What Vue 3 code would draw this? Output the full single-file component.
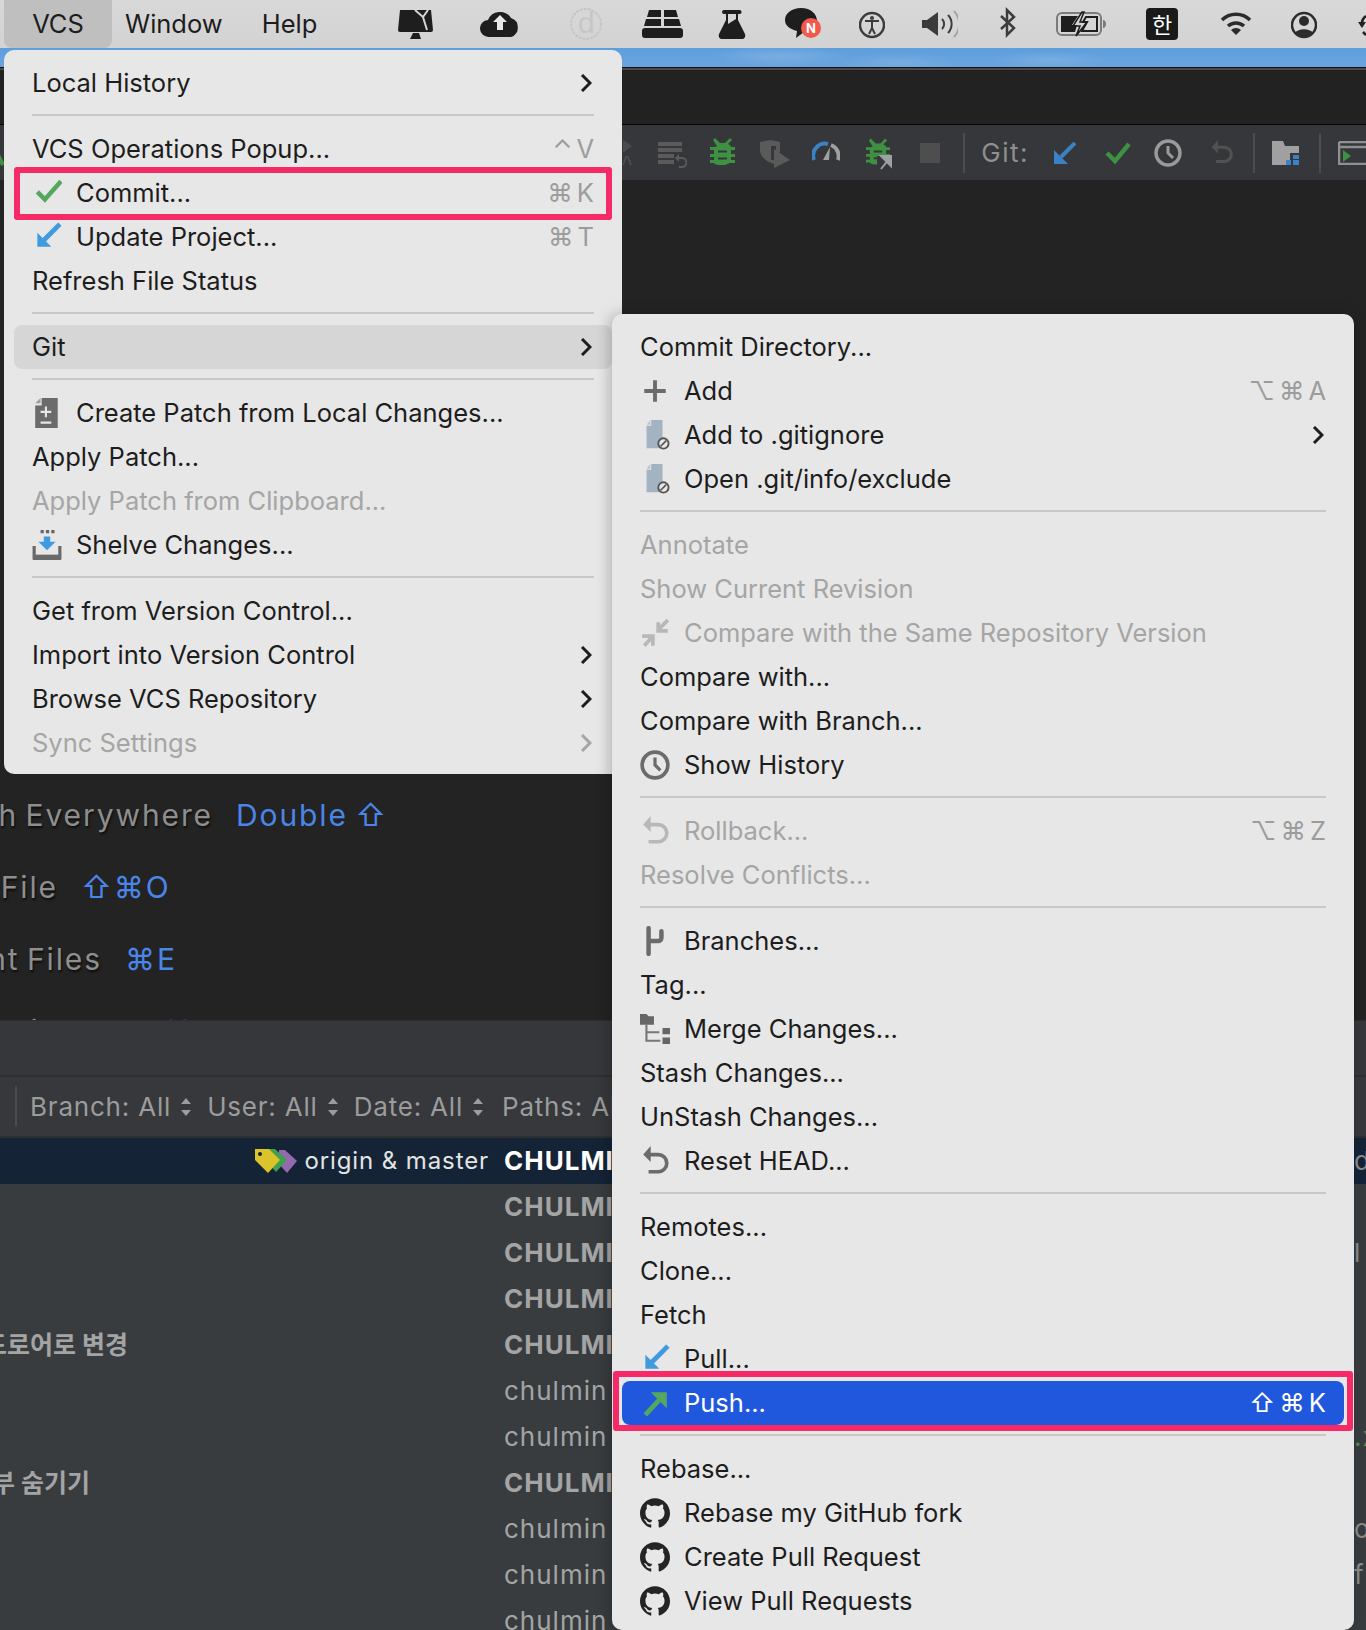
<script setup>
const leftMenu = [
  { t: 'Local History', arrow: true },
  { sep: true },
  { t: 'VCS Operations Popup...', sc: ['⌃', 'V'] },
  { t: 'Commit...', icon: 'i-check', color: 'c-green', sc: ['⌘', 'K'], mark: 'mark-commit' },
  { t: 'Update Project...', icon: 'i-down', color: 'c-blue', sc: ['⌘', 'T'] },
  { t: 'Refresh File Status' },
  { sep: true },
  { t: 'Git', arrow: true, active: true },
  { sep: true },
  { t: 'Create Patch from Local Changes...', icon: 'i-patch', color: 'c-grey' },
  { t: 'Apply Patch...' },
  { t: 'Apply Patch from Clipboard...', dis: true },
  { t: 'Shelve Changes...', icon: 'i-shelve', color: 'c-grey' },
  { sep: true },
  { t: 'Get from Version Control...' },
  { t: 'Import into Version Control', arrow: true },
  { t: 'Browse VCS Repository', arrow: true },
  { t: 'Sync Settings', arrow: true, dis: true }
]
const gitMenu = [
  { t: 'Commit Directory...' },
  { t: 'Add', icon: 'i-plus', color: 'c-grey', sc: ['⌥', '⌘', 'A'] },
  { t: 'Add to .gitignore', icon: 'i-ignored', color: 'c-slate', arrow: true },
  { t: 'Open .git/info/exclude', icon: 'i-ignored', color: 'c-slate' },
  { sep: true },
  { t: 'Annotate', dis: true },
  { t: 'Show Current Revision', dis: true },
  { t: 'Compare with the Same Repository Version', dis: true, icon: 'i-compare', color: 'c-faint' },
  { t: 'Compare with...' },
  { t: 'Compare with Branch...' },
  { t: 'Show History', icon: 'i-clock', color: 'c-grey' },
  { sep: true },
  { t: 'Rollback...', dis: true, icon: 'i-undo', color: 'c-faint', sc: ['⌥', '⌘', 'Z'] },
  { t: 'Resolve Conflicts...', dis: true },
  { sep: true },
  { t: 'Branches...', icon: 'i-branch', color: 'c-grey' },
  { t: 'Tag...' },
  { t: 'Merge Changes...', icon: 'i-merge', color: 'c-grey' },
  { t: 'Stash Changes...' },
  { t: 'UnStash Changes...' },
  { t: 'Reset HEAD...', icon: 'i-undo', color: 'c-grey' },
  { sep: true },
  { t: 'Remotes...' },
  { t: 'Clone...' },
  { t: 'Fetch' },
  { t: 'Pull...', icon: 'i-down', color: 'c-blue' },
  { t: 'Push...', icon: 'i-up', color: 'c-green', sc: ['⇧', '⌘', 'K'], selected: true, mark: 'mark-push' },
  { sep: true },
  { t: 'Rebase...' },
  { t: 'Rebase my GitHub fork', icon: 'i-github', color: 'c-black' },
  { t: 'Create Pull Request', icon: 'i-github', color: 'c-black' },
  { t: 'View Pull Requests', icon: 'i-github', color: 'c-black' }
]
const menus = [
  { cls: 'menu-left', items: leftMenu },
  { cls: 'menu-git', items: gitMenu }
]
const hints = [
  { label: 'Search Everywhere', keys: 'Double ⇧' },
  { label: 'Go to File', keys: '⇧⌘O' },
  { label: 'Recent Files', keys: '⌘E' },
  { label: 'Navigation Bar', keys: '⌘↑' }
]
const filters = ['Branch: All', 'User: All', 'Date: All']
const commits = [
  { author: 'CHULMIN', bold: true, selected: true, refs: 'origin & master', peek: 'd' },
  { author: 'CHULMIN', bold: true },
  { author: 'CHULMIN', bold: true, peek: 'l' },
  { author: 'CHULMIN', bold: true },
  { author: 'CHULMIN', bold: true, msg: '드로어로 변경', msgCls: 'msg-a' },
  { author: 'chulmin' },
  { author: 'chulmin', peek: '.x', green: true },
  { author: 'CHULMIN', bold: true, msg: '일부 숨기기', msgCls: 'msg-b' },
  { author: 'chulmin', peek: 'o' },
  { author: 'chulmin', peek: 'f' },
  { author: 'chulmin' }
]
</script>

<template>
  <div class="page">
    <svg class="defs" width="0" height="0" aria-hidden="true">
      <symbol id="i-check" viewBox="0 0 28 28"><path d="M5 13l7 7L27 3" fill="none" stroke="currentColor" stroke-width="4.200" /></symbol>
      <symbol id="i-down" viewBox="0 0 28 28"><path d="M26 2L11 17" fill="none" stroke="currentColor" stroke-width="4.500" /><path d="M5 10v13h13z" fill="currentColor" /></symbol>
      <symbol id="i-up" viewBox="0 0 28 28"><path d="M5 25L18 11" fill="none" stroke="currentColor" stroke-width="4.500" /><path d="M10 4h15v15z" fill="currentColor" /></symbol>
      <symbol id="i-patch" viewBox="0 0 28 28"><path d="M9 0h15v28H3V7h6z" fill="currentColor" /><path d="M3 5l5-5v5z" fill="#a0a0a0" /><path d="M8 13h10M13 8v10M8 23h10" stroke="#e7e7e7" stroke-width="2" /></symbol>
      <symbol id="i-shelve" viewBox="0 0 28 28"><path d="M8 0h3v3H8zM13 0h3v3h-3zM18 0h3v3h-3z" fill="#666" /><path d="M11 6h6v5h5l-8 8-8-8h5z" fill="#3f9ae0" /><path d="M2 15v11h24V15" fill="none" stroke="#6a6a6a" stroke-width="3" /><path d="M1 23h26v5H1z" fill="#6a6a6a" /></symbol>
      <symbol id="i-plus" viewBox="0 0 28 28"><path d="M14 4v20M4 14h20" stroke="currentColor" stroke-width="3.600" /></symbol>
      <symbol id="i-ignored" viewBox="0 0 28 32"><path d="M10 0h12v30H5V6h5z" fill="currentColor" /><path d="M5 5l4-5v5z" fill="#bcc5cf" /><circle cx="23" cy="25" r="5.500" fill="#e7e7e7" stroke="#555" stroke-width="2" /><path d="M20 28l6-6" stroke="#555" stroke-width="1.800" /></symbol>
      <symbol id="i-compare" viewBox="0 0 28 28"><path d="M17 11L26 2M17 4v8h9" fill="none" stroke="currentColor" stroke-width="3.500" /><path d="M12 17l-8 9M12 26v-9H2" fill="none" stroke="currentColor" stroke-width="3.500" /></symbol>
      <symbol id="i-clock" viewBox="0 0 28 28"><circle cx="14" cy="14" r="12" fill="none" stroke="currentColor" stroke-width="3.400" /><path d="M14 7v7l5 5" fill="none" stroke="currentColor" stroke-width="3" /></symbol>
      <symbol id="i-undo" viewBox="0 0 28 28"><path d="M9 8h8a7 7 0 0 1 0 16H8" fill="none" stroke="currentColor" stroke-width="3.400" /><path d="M10 0v15L3 8z" fill="currentColor" /></symbol>
      <symbol id="i-branch" viewBox="0 0 28 28"><path d="M8 2v24M20 5v6a3 3 0 0 1-3 3H8" fill="none" stroke="currentColor" stroke-width="4.200" stroke-linecap="round" /></symbol>
      <symbol id="i-merge" viewBox="0 0 28 28"><path d="M0 0h6l2 2h5v8H0z" fill="#666" /><path d="M6 10v15h13M6 17h12" fill="none" stroke="#777" stroke-width="2" /><path d="M21 13h7v6h-7zM21 22h7v6h-7z" fill="#666" /></symbol>
      <symbol id="i-github" viewBox="0 0 24 24"><path fill="currentColor" d="M12 .297c-6.630 0-12 5.373-12 12 0 5.303 3.438 9.800 8.205 11.385.6.113.82-.258.82-.577 0-.285-.01-1.040-.015-2.040-3.338.724-4.042-1.610-4.042-1.610C4.422 18.070 3.633 17.700 3.633 17.700c-1.087-.744.084-.729.084-.729 1.205.084 1.838 1.236 1.838 1.236 1.070 1.835 2.809 1.305 3.495.998.108-.776.417-1.305.76-1.605-2.665-.3-5.466-1.332-5.466-5.930 0-1.310.465-2.380 1.235-3.220-.135-.303-.54-1.523.105-3.176 0 0 1.005-.322 3.300 1.230.96-.267 1.980-.399 3-.405 1.020.006 2.040.138 3 .405 2.280-1.552 3.285-1.230 3.285-1.230.645 1.653.24 2.873.12 3.176.765.84 1.230 1.910 1.230 3.220 0 4.610-2.805 5.625-5.475 5.920.42.36.81 1.096.81 2.220 0 1.606-.015 2.896-.015 3.286 0 .315.21.69.825.57C20.565 22.092 24 17.592 24 12.297c0-6.627-5.373-12-12-12" /></symbol>
      <symbol id="i-bug" viewBox="0 0 25 29"><path d="M5 0l5 5h5l5-5 2 2-4 4c2 1 3 2 3 3v14c-1 2-4 4-8.500 4S5 27 4 25V11c0-1 1-2 3-3L3 2z" fill="currentColor" /><path d="M0 9h25v3H0zM0 16h25v3H0zM0 22h25v3H0z" fill="currentColor" /><path d="M8 12.500h9v2H8zM8 19.500h9v2H8z" fill="#35373a" /></symbol>
    </svg>

    <header class="menubar">
      <nav class="appmenu">
        <span class="appitem is-open">VCS</span>
        <span class="appitem">Window</span>
        <span class="appitem">Help</span>
      </nav>
      <div class="tray">
        <svg width="35" height="48" viewBox="0 0 35 48"><path d="M2 10h31l2 20a2 2 0 0 1-2 2H2a2 2 0 0 1-2-2z" fill="#1e1e1e" /><path d="M15 33h6l2 6H12z" fill="#1e1e1e" /><path d="M17 10l8 7 4 13M25 17l5-7" fill="none" stroke="#d6d6d6" stroke-width="2" /></svg>
        <svg width="40" height="48" viewBox="0 0 40 48"><path d="M9 37a8.500 8.500 0 0 1-1-17 13 13 0 0 1 23-2 10 10 0 0 1 0 19z" fill="#1e1e1e" /><path d="M20 15l7 7h-4v8h-6v-8h-4z" fill="#e8e8e8" /></svg>
        <svg width="32" height="48" viewBox="0 0 32 48"><circle cx="16" cy="24" r="15" fill="none" stroke="#c6c6c6" stroke-width="2" stroke-dasharray="3 1" /><text x="8" y="33" class="tray-d">d</text></svg>
        <svg width="41" height="48" viewBox="0 0 41 48"><path d="M7 10h12v7H5zM22 10h12l2 7H22zM4 19h15v7H2zM22 19h15l2 7H22z" fill="#1e1e1e" /><rect y="28" width="41" height="10" rx="3" fill="#1e1e1e" /></svg>
        <svg width="28" height="48" viewBox="0 0 28 48"><path d="M6 10h15a1 1 0 0 1 1 4h-2v6l7 14c1 3-1 5-3 5H4c-2 0-4-2-3-5l7-14v-6H6a1 1 0 0 1 0-4z" fill="#1e1e1e" /><path d="M10 14h8v5l-8 5z" fill="#d6d6d6" /></svg>
        <svg width="38" height="48" viewBox="0 0 38 48"><path d="M17 8c10 0 16 6 16 13 0 7-7 11-13 11l-8 6 1-7C6 29 1 26 1 20 1 13 8 8 17 8z" fill="#1e1e1e" /><circle cx="27" cy="28" r="10" fill="#f4574b" /><text x="27" y="33" class="tray-n">N</text></svg>
        <svg width="26" height="48" viewBox="0 0 26 48"><circle cx="13" cy="25" r="12" fill="none" stroke="#3c3c3c" stroke-width="2.500" /><circle cx="13" cy="18" r="2" fill="#3c3c3c" /><path d="M6 21h14M13 21v7l-3 6M13 28l3 6" fill="none" stroke="#3c3c3c" stroke-width="2" /></svg>
        <svg width="36" height="48" viewBox="0 0 36 48"><path d="M0 20h5l11-8v24L5 28H0z" fill="#3c3c3c" /><path d="M20 19a7 7 0 0 1 0 10M26 15a13 13 0 0 1 0 18" fill="none" stroke="#3c3c3c" stroke-width="2" /><path d="M32 11a19 19 0 0 1 0 26" fill="none" stroke="#a3a3a3" stroke-width="2" /></svg>
        <svg width="17" height="48" viewBox="0 0 17 48"><path d="M2 16l13 12-7 7V10l7 7L2 29" fill="none" stroke="#3c3c3c" stroke-width="2.500" /></svg>
        <svg width="51" height="48" viewBox="0 0 51 48"><rect x="1" y="13" width="44" height="22" rx="5" fill="none" stroke="#7b7b7b" stroke-width="2" /><path d="M47 20c2 0 3 2 3 4s-1 4-3 4z" fill="#7b7b7b" /><path d="M5 16h17l-6 9h5l-2 7H5z" fill="#1e1e1e" /><path d="M26 12l-9 14h7l-4 10 11-14h-7l4-10z" fill="none" stroke="#1e1e1e" stroke-width="1.500" /><path d="M30 17h11v14H26l5-9h-4z" fill="none" stroke="#1e1e1e" stroke-width="2" /></svg>
        <svg width="32" height="48" viewBox="0 0 32 48"><rect y="8" width="32" height="32" rx="4" fill="#1a1a1a" /><text x="16" y="33" class="tray-han">한</text></svg>
        <svg width="32" height="48" viewBox="0 0 32 48"><path d="M2 20a20 20 0 0 1 28 0M8 26a12 12 0 0 1 16 0" fill="none" stroke="#2b2b2b" stroke-width="3.500" /><path d="M16 35l-5-5a7 7 0 0 1 10 0z" fill="#2b2b2b" /></svg>
        <svg width="26" height="48" viewBox="0 0 26 48"><circle cx="13" cy="25" r="12" fill="none" stroke="#2b2b2b" stroke-width="2.500" /><circle cx="13" cy="21" r="5" fill="#2b2b2b" /><path d="M4 33c3-5 15-5 18 0-4 5-14 5-18 0z" fill="#2b2b2b" /></svg>
        <svg width="8" height="48" viewBox="0 0 8 48"><path d="M8 16a10 10 0 0 0-4 10M8 35l-3-3" fill="none" stroke="#222" stroke-width="2.500" /><path d="M0 22h8l-4 6z" fill="#222" /></svg>
      </div>
    </header>

    <div class="wallpaper"></div>
    <div class="titlebar"></div>

    <div class="toolbar">
      <svg width="4" height="55" viewBox="0 0 4 55"><path d="M-3 28l6 12" stroke="#3f9142" stroke-width="4" /></svg>
      <svg width="11" height="55" viewBox="0 0 11 55"><path d="M1 15l9 6-9 7z" fill="#4a4c4f" /><path d="M1 40l3-8h2l3 8" fill="none" stroke="#4a4c4f" stroke-width="2" /></svg>
      <svg width="29" height="55" viewBox="0 0 29 55"><path d="M0 17h24v4H0zM0 23h24v4H0zM0 29h16v4H0zM0 35h16v4H0z" fill="#5b5b5b" /><path d="M20 33h4a4 4 0 0 1 0 9h-3" fill="none" stroke="#5b5b5b" stroke-width="2" /><path d="M21 29v8l-4-4z" fill="#5b5b5b" /></svg>
      <svg class="c-tgreen" width="25" height="29"><use href="#i-bug" /></svg>
      <svg width="30" height="55" viewBox="0 0 30 55"><path d="M0 17l10-2 10 2v9l-6 13C5 36 0 31 0 25z" fill="#5a5a5a" /><path d="M11 21h5v14h-5z" fill="#35373a" /><path d="M14 24l16 11-16 8z" fill="#5a5a5a" /></svg>
      <svg width="28" height="55" viewBox="0 0 28 55"><path d="M2 35a12 12 0 0 1 14-16" fill="none" stroke="#3b82c4" stroke-width="4" /><path d="M19 20a12 12 0 0 1 7 15" fill="none" stroke="#a0a0a0" stroke-width="4" /><path d="M11 35l7-13-1 13z" fill="#a0a0a0" /></svg>
      <svg width="28" height="55" viewBox="0 0 28 55"><use href="#i-bug" class="c-tgreen" width="24" height="29" y="13" /><path d="M11 31h17v14H11z" fill="#35373a" /><path d="M15 44l8-10M15 31h10v10z" fill="#a0a0a0" stroke="#a0a0a0" stroke-width="2" /></svg>
      <svg width="20" height="20" viewBox="0 0 20 20"><rect width="20" height="20" fill="#4e4e4e" /></svg>
      <span class="tb-sep"></span>
      <span class="tb-git">Git:</span>
      <svg class="c-tblue" width="22" height="22" viewBox="0 0 22 22"><path d="M21 1L7 15" fill="none" stroke="currentColor" stroke-width="4" /><path d="M0 8v14h14z" fill="currentColor" /></svg>
      <svg class="c-tgreen" width="26" height="22" viewBox="0 0 26 22"><path d="M2 11l8 8L24 2" fill="none" stroke="currentColor" stroke-width="4.500" /></svg>
      <svg class="c-tgrey" width="28" height="28"><use href="#i-clock" /></svg>
      <svg class="c-tdark" width="25" height="25" viewBox="0 0 28 28"><use href="#i-undo" /></svg>
      <span class="tb-sep"></span>
      <svg width="28" height="24" viewBox="0 0 28 24"><path d="M0 0h11l2 5h14v7h-9v12H0z" fill="#a0a0a0" /><path d="M21 14h6v4h-6zM14 19h5v5h-5zM21 19h6v5h-6z" fill="#3b82c4" /></svg>
      <span class="tb-sep"></span>
      <svg width="28" height="24" viewBox="0 0 28 24"><path d="M1 1h27M1 1v22h27M1 6h27" fill="none" stroke="#909090" stroke-width="2.500" /><path d="M5 9l8 6-8 6z" fill="#3f9142" /></svg>
    </div>

    <main class="editor">
      <div v-for="h in hints" :key="h.label" class="hint">
        <span class="hint-label">{{ h.label }}</span>
        <span class="hint-keys">{{ h.keys }}</span>
      </div>
    </main>

    <section class="panel">
      <div class="panel-head"></div>
      <div class="filters">
        <i class="filter-sep"></i>
        <template v-for="f in filters" :key="f">
          <span>{{ f }}</span>
          <svg class="sort" width="10" height="20" viewBox="0 0 10 20"><path d="M5 1l5 6H0zM5 19l5-6H0z" fill="#9c9c9c" /></svg>
        </template>
        <span class="filter-last">Paths: All</span>
      </div>
      <div class="commits">
        <div v-for="(c, i) in commits" :key="i" class="commit" :class="{ 'is-selected': c.selected }">
          <div class="commit-msg" :class="c.msgCls">
            <span v-if="c.msg" class="msg-text">{{ c.msg }}</span>
            <template v-if="c.refs">
              <svg class="tags" width="42" height="24" viewBox="0 0 42 24"><path d="M24 1h6l12 11-10 12-8-9z" fill="#9569ad" /><path d="M13 0h7l12 11-11 12-8-9z" fill="#3ea14b" /><path d="M0 0h14l11 11-12 13L0 11z" fill="#dcc22b" /><circle cx="5" cy="5" r="2" fill="#142336" /></svg>
              <span class="refs">{{ c.refs }}</span>
            </template>
          </div>
          <span class="author" :class="{ 'is-bold': c.bold }">{{ c.author }}</span>
          <span class="peek" :class="{ 'is-green': c.green }">{{ c.peek }}</span>
        </div>
      </div>
    </section>

    <div v-for="m in menus" :key="m.cls" class="menu" :class="m.cls">
      <template v-for="(it, i) in m.items" :key="i">
        <div v-if="it.sep" class="sep"></div>
        <div v-else class="row" :class="{ 'is-dis': it.dis, 'is-active': it.active, 'is-selected': it.selected }">
          <svg v-if="it.icon" class="row-icon" :class="it.color" width="30" height="30"><use :href="'#' + it.icon" /></svg>
          <span class="row-text" :class="{ 'has-icon': it.icon }">{{ it.t }}</span>
          <span v-if="it.sc" class="shortcut"><span v-for="k in it.sc" :key="k">{{ k }}</span></span>
          <svg v-if="it.arrow" class="chev" width="12" height="18" viewBox="0 0 12 18"><path d="M2 1l8 8-8 8" fill="none" stroke="currentColor" stroke-width="3" /></svg>
          <i v-if="it.mark" class="mark" :class="it.mark"></i>
        </div>
      </template>
    </div>
  </div>
</template>

<style scoped>
.page {
  position: relative;
  width: 1366px;
  height: 1630px;
  overflow: hidden;
  background: #232323;
  font-family: Inter, "Noto Sans CJK KR", "DejaVu Sans", sans-serif;
}
.defs { position: absolute; }

.menubar {
  display: flex;
  height: 48px;
  background: linear-gradient(#d8d8d8, #d3d3d3);
}
.appmenu {
  flex: 0 0 398px;
  display: flex;
  padding-left: 4px;
  box-sizing: border-box;
  font-size: 25.500px;
  color: #1d1d1d;
}
.appitem { line-height: 48px; margin-left: 39px; }
.appitem:nth-child(1) {
  margin-left: 0;
  width: 108px;
  text-align: center;
  background: #bfbfbf;
  border-radius: 0 0 8px 8px;
}
.appitem:nth-child(2) { margin-left: 13px; }
.tray {
  display: grid;
  grid-template-columns: 35px 87px 82px 81px 63px 76px 63px 73px 58px 91px 71px 74px 65px 49px;
  justify-items: end;
  height: 48px;
}
.tray svg { display: block; }
.tray-d { font: 30px "Liberation Sans", sans-serif; fill: #c6c6c6; }
.tray-n { font: 700 13px Inter, sans-serif; fill: #fff; text-anchor: middle; }
.tray-han { font: 22px "Noto Sans CJK KR", sans-serif; fill: #fff; text-anchor: middle; }

.wallpaper {
  height: 19px;
  background:
    radial-gradient(ellipse 70px 10px at 780px 8px, rgba(255, 255, 255, 0.14), transparent),
    radial-gradient(ellipse 60px 9px at 900px 14px, rgba(255, 255, 255, 0.1), transparent),
    radial-gradient(ellipse 60px 9px at 1050px 12px, rgba(255, 255, 255, 0.12), transparent),
    linear-gradient(#5e9edd, #6aa4de);
}
.titlebar {
  height: 58px;
  box-sizing: border-box;
  background: #222;
  border-top: 1px solid #101010;
  border-bottom: 1px solid #050505;
  box-shadow: inset 0 2px 0 #4a4a4a;
}

.toolbar {
  display: grid;
  grid-template-columns: 4px 629px 54px 48px 55px 50px 54px 46px 25px 64px 47px 55px 51px 52px 21px 45px 21px 45px;
  justify-items: end;
  align-items: center;
  height: 55px;
  background: #35373a;
}
.toolbar svg { display: block; }
.tb-sep { width: 2px; height: 40px; background: #4a4c4f; }
.tb-git { font-size: 26px; color: #8f8f8f; letter-spacing: 1.500px; }
.c-tgreen { color: #3f9142; }
.c-tblue { color: #3b82c4; }
.c-tgrey { color: #9a9a9a; }
.c-tdark { color: #525252; }

.editor {
  height: 840px;
  overflow: hidden;
  box-sizing: border-box;
  padding-top: 599px;
  background: #232323;
}
.hint {
  display: flex;
  align-items: center;
  height: 72px;
  font-size: 30px;
  letter-spacing: 1.900px;
  word-spacing: -3px;
  white-space: nowrap;
}
.hint-label {
  display: flex;
  justify-content: flex-end;
  color: #8e8e8e;
  text-shadow: 1px 2px 2px #0d0d0d;
}
.hint-keys { margin-left: 23px; color: #4a86e8; }
.hint:nth-child(1) .hint-label { width: 213px; }
.hint:nth-child(2) .hint-label { width: 58px; }
.hint:nth-child(3) .hint-label { width: 102px; }
.hint:nth-child(4) .hint-label { width: 140px; }

.panel-head {
  height: 55px;
  box-sizing: border-box;
  background: #35373a;
  border-top: 1px solid #2c2d2f;
}
.filters {
  display: flex;
  align-items: center;
  height: 63px;
  box-sizing: border-box;
  padding-left: 30px;
  background: #36383b;
  border-top: 2px solid #2d2f31;
  border-bottom: 2px solid #2d2f31;
  font-size: 26px;
  letter-spacing: 0.800px;
  color: #9c9c9c;
  white-space: nowrap;
  position: relative;
}
.filter-sep {
  position: absolute;
  left: 15px;
  top: 9px;
  width: 2px;
  height: 40px;
  background: #4a4c4f;
}
.sort { margin: 0 16px 0 10px; flex: none; }
.filter-last { margin-left: 3px; }

.commits { background: #383c3f; }
.commit {
  display: grid;
  grid-template-columns: 504px 850px 12px;
  height: 46px;
  line-height: 46px;
  font-size: 26px;
  letter-spacing: 1px;
  color: #a4a4a4;
  white-space: nowrap;
}
.commit.is-selected { background: #142336; color: #e4e4e4; }
.commit-msg {
  display: flex;
  justify-content: flex-end;
  align-items: center;
  overflow: hidden;
  box-sizing: border-box;
}
.msg-a { padding-right: 376px; }
.msg-b { padding-right: 414px; }
.msg-text { font-weight: 700; font-size: 25px; letter-spacing: 0; }
.is-selected .commit-msg { padding-right: 15px; }
.refs { font-size: 24px; letter-spacing: 0.900px; }
.tags { flex: none; margin-right: 7px; }
.author.is-bold { font-weight: 700; }
.is-selected .author { color: #fff; }
.peek { overflow: hidden; color: #8a8a8a; padding-left: 0; }
.peek.is-green { color: #5f8a4f; }

.menu {
  position: absolute;
  box-sizing: border-box;
  background: #e7e7e7;
  color: #1d1d1d;
  font-size: 25.500px;
  white-space: nowrap;
}
.menu-left {
  left: 4px;
  top: 50px;
  width: 618px;
  padding: 11px 10px 9px;
  border-radius: 10px;
}
.menu-git {
  left: 612px;
  top: 314px;
  width: 742px;
  height: 1316px;
  padding: 11px 10px 7px;
  border-radius: 10px;
  box-shadow: -3px 0 14px rgba(0, 0, 0, 0.22);
}
.sep {
  height: 2px;
  margin: 9px 18px 11px;
  background: #c8c8c8;
}
.row {
  position: relative;
  display: flex;
  align-items: center;
  height: 44px;
  padding: 0 18px;
  border-radius: 8px;
}
.row.is-dis { color: #a5a5a5; }
.row.is-active { background: #d6d6d6; }
.row.is-selected { background: #1f57dd; color: #fff; }
.row-icon {
  flex: none;
  width: 30px;
  height: 30px;
  margin-right: 14px;
}
.c-green { color: #55a760; }
.c-blue { color: #3f9ae0; }
.c-grey { color: #6b6b6b; }
.c-slate { color: #a3b3c2; }
.c-faint { color: #b8b8b8; }
.c-black { color: #242424; }
.row-text { flex: 1; margin-bottom: 2px; }
.shortcut {
  display: flex;
  gap: 4px;
  margin-bottom: 2px;
  color: #9c9c9c;
}
.is-selected .shortcut { color: #fff; }
.chev { flex: none; color: #1d1d1d; margin-right: 2px; }
.is-dis .chev { color: #a5a5a5; }
.mark {
  position: absolute;
  box-sizing: border-box;
  border: 6px solid #f72a68;
  border-radius: 3px;
}
.mark-commit { left: 0; right: 0; top: -4px; bottom: -5px; }
.mark-push { left: -9px; right: -9px; top: -10px; bottom: -6px; }
</style>
